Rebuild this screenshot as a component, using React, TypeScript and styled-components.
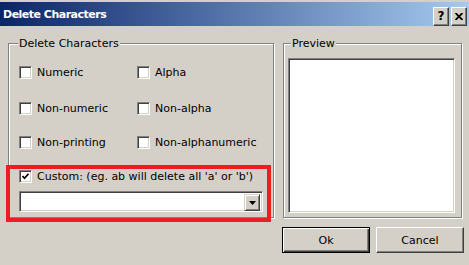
import styled, { createGlobalStyle } from "styled-components"

const GlobalStyle = createGlobalStyle`
    * { box-sizing: border-box; }
    body {
        margin: 0;
        background: #d4d0c8;
        font-family: "DejaVu Sans", Verdana, sans-serif;
        font-size: 11px;
        color: #000;
    }
`

const Window = styled.div`
    width: 469px;
    height: 265px;
    background: #d4d0c8;
    padding-top: 2px;
    display: flex;
    flex-direction: column;
    overflow: hidden;
`

const TitleBar = styled.div`
    height: 24px;
    display: flex;
    align-items: center;
    padding: 0 2px 0 3px;
    background: linear-gradient(to right, #0a246a, #a6caf0);
`

const TitleText = styled.span`
    flex: 1;
    color: #fff;
    font-weight: bold;
    font-size: 11px;
    letter-spacing: -0.5px;
    padding-top: 1px;
`

const TitleButton = styled.button`
    width: 16px;
    height: 19px;
    margin-left: 2px;
    margin-top: 4px;
    padding: 0;
    display: flex;
    align-items: center;
    justify-content: center;
    background: #d4d0c8;
    border: 1px solid;
    border-color: #fff #404040 #404040 #fff;
    box-shadow: inset -1px -1px 0 #808080;
    font-family: "DejaVu Sans", sans-serif;
    font-weight: bold;
    font-size: 12px;
    color: #000;
`

const Content = styled.div`
    display: flex;
    gap: 9px;
    padding: 17px 0 0 8px;
`

const Group = styled.div<{ w: number }>`
    position: relative;
    width: ${({ w }) => w}px;
    height: 175px;
    border: 1px solid #808080;
    box-shadow: 1px 1px 0 #fff, inset 1px 1px 0 #fff;
`

const Legend = styled.span<{ left: number }>`
    position: absolute;
    top: -7px;
    left: ${({ left }) => left}px;
    padding: 0 1px;
    line-height: 13px;
    background: #d4d0c8;
`

const LeftInner = styled.div`
    padding: 22px 0 0 10px;
`

const OptionGrid = styled.div`
    display: grid;
    grid-template-columns: 118px 1fr;
    grid-template-rows: 13px 13px 13px;
    row-gap: 22px;

    & > :nth-child(n + 3) {
        margin-top: 1px;
    }
    & > :nth-child(n + 5) {
        margin-top: 0;
    }
`

const Option = styled.label`
    display: flex;
    align-items: center;
    gap: 5px;
    height: 13px;
    white-space: nowrap;
`

const Box = styled.span`
    width: 13px;
    height: 13px;
    flex: none;
    display: flex;
    align-items: center;
    justify-content: center;
    background: #fff;
    border: 1px solid;
    border-color: #808080 #fff #fff #808080;
    box-shadow: inset 1px 1px 0 #404040, inset -1px -1px 0 #d4d0c8;
`

const Highlight = styled.div`
    width: 265px;
    margin: 16px 0 0 -13px;
    padding: 1px 5px 6px 9px;
    border: 4px solid #ed1c24;
    display: flex;
    flex-direction: column;
    gap: 8px;
`

const Combo = styled.div`
    width: 244px;
    height: 21px;
    display: flex;
    justify-content: flex-end;
    padding: 2px;
    background: #fff;
    border: 1px solid;
    border-color: #808080 #fff #fff #808080;
    box-shadow: inset 1px 1px 0 #404040, inset -1px -1px 0 #d4d0c8;
`

const DropButton = styled.span`
    width: 16px;
    height: 17px;
    display: flex;
    align-items: center;
    justify-content: center;
    background: #d4d0c8;
    border: 1px solid;
    border-color: #d4d0c8 #404040 #404040 #d4d0c8;
    box-shadow: inset 1px 1px 0 #fff, inset -1px -1px 0 #808080;
`

const RightColumn = styled.div`
    display: flex;
    flex-direction: column;
    gap: 9px;
`

const PreviewInner = styled.div`
    padding: 14px 0 0 4px;
`

const ListBox = styled.div`
    width: 167px;
    height: 155px;
    background: #fff;
    border: 1px solid;
    border-color: #808080 #fff #fff #808080;
    box-shadow: inset 1px 1px 0 #404040, inset -1px -1px 0 #d4d0c8;
`

const ButtonRow = styled.div`
    display: flex;
    gap: 6px;
    margin-left: -1px;
`

const PushButton = styled.button<{ isDefault?: boolean }>`
    width: 88px;
    height: 26px;
    padding: 0;
    background: #d4d0c8;
    font-family: "DejaVu Sans", sans-serif;
    font-size: 11px;
    color: #000;
    border: 1px solid;
    border-color: ${({ isDefault }) => isDefault ? "#000" : "#fff #404040 #404040 #fff"};
    box-shadow: ${({ isDefault }) => isDefault
        ? "inset 1px 1px 0 #fff, inset -1px -1px 0 #404040, inset -2px -2px 0 #808080"
        : "inset -1px -1px 0 #808080"};
`

const options = [
    ["Numeric", "Alpha"],
    ["Non-numeric", "Non-alpha"],
    ["Non-printing", "Non-alphanumeric"],
]

const Check = () => (
    <svg width="7" height="7" viewBox="0 0 7 7">
        <path d="M0.5 3 L2.5 5.2 L6.5 0.8" stroke="#000" strokeWidth="1.7" fill="none" />
    </svg>
)

export default function App() {
    return (
        <>
            <GlobalStyle />
            <Window>
                <TitleBar>
                    <TitleText>Delete Characters</TitleText>
                    <TitleButton>?</TitleButton>
                    <TitleButton>
                        <svg width="8" height="7" viewBox="0 0 8 7">
                            <path d="M0.5 0 L7.5 7 M7.5 0 L0.5 7" stroke="#000" strokeWidth="1.8" />
                        </svg>
                    </TitleButton>
                </TitleBar>
                <Content>
                    <Group w={266}>
                        <Legend left={9}>Delete Characters</Legend>
                        <LeftInner>
                            <OptionGrid>
                                {options.flat().map(label => (
                                    <Option key={label}>
                                        <Box />
                                        {label}
                                    </Option>
                                ))}
                            </OptionGrid>
                            <Highlight>
                                <Option>
                                    <Box><Check /></Box>
                                    Custom: (eg. ab will delete all 'a' or 'b')
                                </Option>
                                <Combo>
                                    <DropButton>
                                        <svg width="7" height="4" viewBox="0 0 7 4">
                                            <path d="M0 0 H7 L3.5 4 Z" fill="#000" />
                                        </svg>
                                    </DropButton>
                                </Combo>
                            </Highlight>
                        </LeftInner>
                    </Group>
                    <RightColumn>
                        <Group w={179}>
                            <Legend left={7}>Preview</Legend>
                            <PreviewInner>
                                <ListBox />
                            </PreviewInner>
                        </Group>
                        <ButtonRow>
                            <PushButton isDefault>Ok</PushButton>
                            <PushButton>Cancel</PushButton>
                        </ButtonRow>
                    </RightColumn>
                </Content>
            </Window>
        </>
    )
}
